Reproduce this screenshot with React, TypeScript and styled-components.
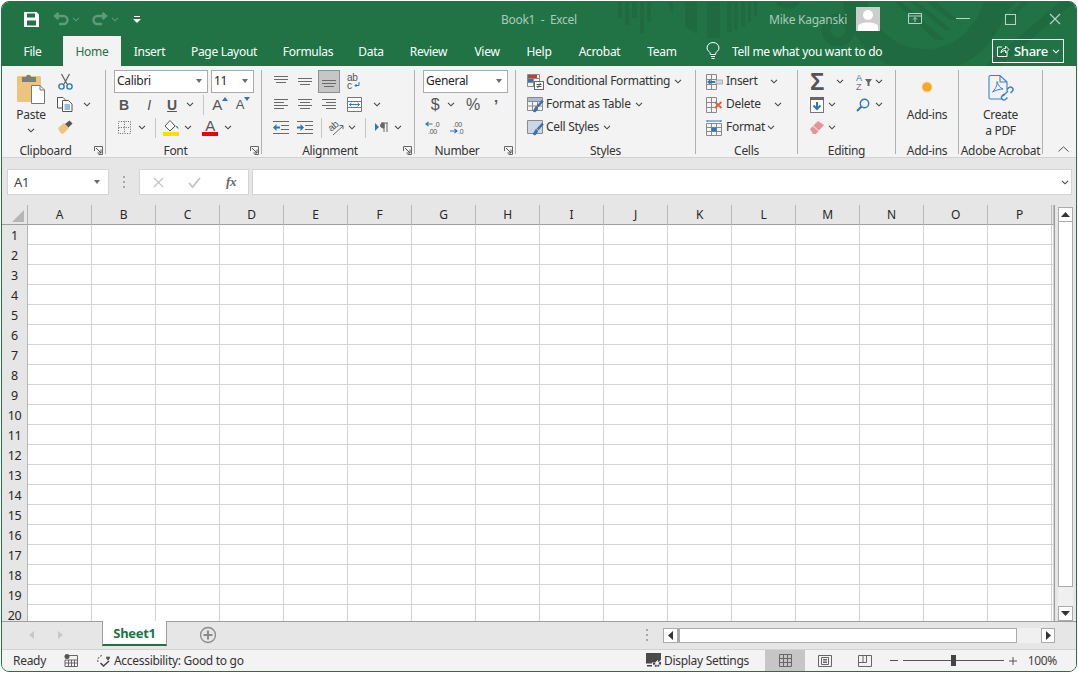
import { Fragment, type ReactNode } from "react";
import styled, { createGlobalStyle } from "styled-components";

const GlobalStyle = createGlobalStyle`
  html, body { margin: 0; padding: 0; background: #fff; }
  * { box-sizing: border-box; }
  body {
    font-family: "Noto Sans", "Open Sans", sans-serif;
    font-size: 12px;
    letter-spacing: -0.3px;
    color: #262626;
    overflow: hidden;
  }
`;

const Window = styled.div`
  margin: 1px 0 0 1px;
  width: 1076px;
  height: 671px;
  border: 1px solid #217346;
  border-radius: 8px;
  overflow: hidden;
  display: flex;
  flex-direction: column;
  background: #e6e6e6;
`;

const Head = styled.div`
  position: relative;
  background: #217346;
  height: 64px;
  flex: none;
`;

const Deco = styled.svg`
  position: absolute;
  left: 0;
  top: 0;
`;

const TitleBar = styled.div`
  position: relative;
  height: 34px;
  display: flex;
  align-items: center;
  padding-left: 20px;
`;

const Slot = styled.div<{ $w: number; $ml?: number }>`
  width: ${(p) => p.$w}px;
  margin-left: ${(p) => p.$ml ?? 0}px;
  flex: none;
  display: flex;
  align-items: center;
  justify-content: center;
  height: 100%;
`;

const DocTitle = styled.div`
  margin: 1px 0 0 357px;
  color: #a9cbb8;
  white-space: pre;
  font-size: 12px;
`;

const UserBlock = styled.div`
  margin-left: auto;
  display: flex;
  align-items: center;
  height: 100%;
`;

const UserName = styled.div`
  color: #a9cbb8;
  font-size: 12px;
  letter-spacing: -0.25px;
  margin: 1px 9px 0 0;
`;

const Avatar = styled.div`
  width: 24px;
  height: 24px;
  background: #cdcdcd;
  margin-right: 12px;
  overflow: hidden;
`;

const TabRow = styled.div`
  position: relative;
  height: 30px;
  display: flex;
  align-items: stretch;
`;

const Tab = styled.div<{ $w: number; $active?: boolean }>`
  width: ${(p) => p.$w}px;
  flex: none;
  display: flex;
  align-items: center;
  justify-content: center;
  color: ${(p) => (p.$active ? "#217346" : "#fff")};
  background: ${(p) => (p.$active ? "#f3f3f3" : "transparent")};
  font-size: 12px;
`;

const TellMe = styled.div`
  display: flex;
  align-items: center;
  color: #fff;
  margin-left: 16px;
  gap: 12px;
`;

const ShareButton = styled.div`
  margin: 3px 12px 3px auto;
  width: 72px;
  border: 1px solid #fff;
  display: flex;
  align-items: center;
  justify-content: center;
  gap: 4px;
  color: #fff;
  font-size: 13px;
  font-weight: 500;
`;

const Ribbon = styled.div`
  height: 92px;
  flex: none;
  background: #f3f3f3;
  border-bottom: 1px solid #d2d2d2;
  padding: 4px 0 3px;
  display: flex;
`;

const Group = styled.div<{ $w: number }>`
  width: ${(p) => p.$w}px;
  flex: none;
  border-right: 1px solid #b1b1b1;
  display: flex;
  flex-direction: column;
  height: 84px;
`;

const GroupBody = styled.div`
  flex: 1;
  display: flex;
  min-height: 0;
`;

const Rows = styled.div`
  display: flex;
  flex-direction: column;
`;

const Row = styled.div<{ $pl?: number }>`
  display: flex;
  align-items: center;
  height: 23px;
  padding-left: ${(p) => p.$pl ?? 0}px;
  white-space: nowrap;
`;

const GroupFoot = styled.div`
  height: 15px;
  padding-top: 7px;
  display: flex;
  align-items: center;
  font-size: 12px;
  color: #333;
`;

const FootLabel = styled.div`
  flex: 1;
  text-align: center;
  white-space: nowrap;
`;

const Launcher = styled.div`
  width: 16px;
  display: flex;
  align-items: center;
  justify-content: center;
  padding-left: 2px;
`;

const Combo = styled.div<{ $w: number; $ml?: number }>`
  width: ${(p) => p.$w}px;
  height: 23px;
  margin-top: -1px;
  margin-left: ${(p) => p.$ml ?? 0}px;
  background: #fff;
  border: 1px solid #ababab;
  padding: 0 5px 1px 2px;
  display: flex;
  align-items: center;
  justify-content: space-between;
  flex: none;
`;

const Caret = styled.span`
  width: 0;
  height: 0;
  border-left: 3.5px solid transparent;
  border-right: 3.5px solid transparent;
  border-top: 4px solid #6a6a6a;
`;

const Sep = styled.div<{ $w: number }>`
  width: ${(p) => p.$w}px;
  flex: none;
  display: flex;
  justify-content: center;
  &::after {
    content: "";
    width: 1px;
    height: 20px;
    background: #c6c6c6;
  }
`;

const FaceText = styled.span<{ $bold?: boolean; $italic?: boolean; $under?: boolean; $size?: number }>`
  font-family: "Liberation Sans", sans-serif;
  font-size: ${(p) => p.$size ?? 14}px;
  font-weight: ${(p) => (p.$bold ? 700 : 400)};
  font-style: ${(p) => (p.$italic ? "italic" : "normal")};
  text-decoration: ${(p) => (p.$under ? "underline" : "none")};
  color: #555;
`;

const ActiveSlot = styled.div`
  width: 22px;
  height: 23px;
  margin-top: -1px;
  flex: none;
  background: #c6c6c6;
  border: 1px solid #8f8f8f;
  display: flex;
  align-items: center;
  justify-content: center;
`;

const CmdText = styled.span<{ $ml?: number; $w?: number }>`
  margin-left: ${(p) => p.$ml ?? 0}px;
  ${(p) => (p.$w ? `width: ${p.$w}px; flex: none;` : "")}
  color: #333;
`;

const RibbonCmd = styled(CmdText)`
  margin-top: -2px;
`;

const BigButton = styled.div<{ $w: number; $ml?: number; $top: number }>`
  width: ${(p) => p.$w}px;
  margin-left: ${(p) => p.$ml ?? 0}px;
  padding-top: ${(p) => p.$top}px;
  flex: none;
  display: flex;
  flex-direction: column;
  align-items: center;
  line-height: 16px;
  color: #333;
`;

const BigLine = styled.span<{ $mt?: number }>`
  display: block;
  margin-top: ${(p) => p.$mt ?? 0}px;
`;

const Collapse = styled.div`
  align-self: flex-end;
  margin-left: 15px;
  height: 10px;
  display: flex;
  align-items: center;
`;

const FormulaBar = styled.div`
  height: 47px;
  flex: none;
  padding: 11px 0 10px 5px;
  display: flex;
  background: #e6e6e6;
`;

const NameBox = styled.div`
  width: 102px;
  background: #fff;
  border: 1px solid #d4d4d4;
  padding: 0 8px 0 6px;
  display: flex;
  align-items: center;
  justify-content: space-between;
  font-size: 13px;
  color: #444;
`;

const GripDots = styled.div<{ $w: number; $mr?: number }>`
  width: ${(p) => p.$w}px;
  margin-right: ${(p) => p.$mr ?? 0}px;
  flex: none;
  display: flex;
  flex-direction: column;
  align-items: center;
  justify-content: center;
  gap: 3px;
  & > i {
    width: 2px;
    height: 2px;
    background: #a8a8a8;
  }
`;

const FxBox = styled.div`
  width: 110px;
  background: #fff;
  border: 1px solid #d4d4d4;
  display: flex;
  align-items: center;
`;

const FxMark = styled.span`
  font-family: "Liberation Serif", serif;
  font-style: italic;
  font-weight: 700;
  font-size: 13px;
  color: #666;
`;

const FormulaInput = styled.div`
  width: 820px;
  margin-left: 3px;
  background: #fff;
  border: 1px solid #d4d4d4;
  display: flex;
  align-items: center;
  justify-content: flex-end;
  padding-right: 2px;
`;

const SheetArea = styled.div`
  height: 416px;
  flex: none;
  display: flex;
`;

const Viewport = styled.div`
  width: 1053px;
  height: 416px;
  flex: none;
  overflow: hidden;
  border-right: 1px solid #9f9f9f;
`;

const CellGrid = styled.div`
  display: grid;
  grid-template-columns: 26px repeat(16, 64px) 2px;
  grid-auto-rows: 20px;
  background: #fff;
`;

const Corner = styled.div`
  background: #e6e6e6;
  border-right: 1px solid #b4b4b4;
  border-bottom: 1px solid #9f9f9f;
  position: relative;
  &::after {
    content: "";
    position: absolute;
    right: 3px;
    bottom: 2px;
    border-left: 12px solid transparent;
    border-bottom: 12px solid #b6b6b6;
  }
`;

const ColHead = styled.div`
  background: #e6e6e6;
  border-right: 1px solid #b9b9b9;
  border-bottom: 1px solid #9f9f9f;
  display: flex;
  align-items: center;
  justify-content: center;
  color: #262626;
  font-size: 12px;
`;

const RowHead = styled.div`
  background: #e6e6e6;
  border-right: 1px solid #b4b4b4;
  display: flex;
  align-items: center;
  justify-content: center;
  color: #262626;
  font-size: 12.5px;
`;

const Cell = styled.div`
  border-right: 1px solid #d4d4d4;
  border-bottom: 1px solid #d4d4d4;
`;

const VScroll = styled.div`
  width: 15px;
  margin: 2px 0 0 3px;
  flex: none;
  display: flex;
  flex-direction: column;
  height: 414px;
`;

const ScrollButton = styled.div<{ $w?: number; $h?: number }>`
  width: ${(p) => (p.$w ? `${p.$w}px` : "auto")};
  height: ${(p) => (p.$h ? `${p.$h}px` : "auto")};
  flex: none;
  background: #fff;
  border: 1px solid #ababab;
  display: flex;
  align-items: center;
  justify-content: center;
`;

const VThumb = styled.div`
  height: 365px;
  flex: none;
  background: #fff;
  border: 1px solid #ababab;
  border-top: 0;
`;

const VTrack = styled.div`
  flex: 1;
  background: #f0f0f0;
`;

const SheetTabs = styled.div`
  height: 28px;
  flex: none;
  border-top: 1px solid #9f9f9f;
  padding-left: 18px;
  display: flex;
  align-items: flex-start;
`;

const SheetTab = styled.div`
  width: 65px;
  height: 25px;
  margin: -1px 0 0 24px;
  flex: none;
  background: #fff;
  border-left: 1px solid #9f9f9f;
  border-right: 1px solid #9f9f9f;
  border-bottom: 2px solid #217346;
  color: #217346;
  font-weight: 700;
  font-size: 13px;
  display: flex;
  align-items: center;
  justify-content: center;
`;

const TabNav = styled.div`
  display: flex;
  height: 26px;
`;

const AddSheet = styled.div`
  margin: 4px 0 0 32px;
  width: 18px;
  height: 18px;
`;

const HScrollWrap = styled.div`
  margin: 0 21px 0 auto;
  display: flex;
  height: 26px;
  align-items: center;
`;

const HScroll = styled.div`
  display: flex;
  height: 15px;
  width: 392px;
  margin-top: 1px;
`;

const HThumb = styled.div`
  width: 339px;
  flex: none;
  background: #fff;
  border: 1px solid #ababab;
  border-left: 2px solid #ababab;
`;

const HTrack = styled.div`
  flex: 1;
  background: #f0f0f0;
`;

const StatusBar = styled.div`
  height: 22px;
  flex: none;
  background: #f3f3f3;
  border-top: 1px solid #d2d2d2;
  padding-left: 11px;
  display: flex;
  align-items: center;
  color: #444;
  font-size: 12px;
  white-space: nowrap;
`;

const StatusRight = styled.div`
  margin-left: auto;
  height: 100%;
  display: flex;
  align-items: center;
  padding-right: 19px;
`;

const ViewToggle = styled.div<{ $active?: boolean }>`
  width: 40px;
  height: 100%;
  flex: none;
  background: ${(p) => (p.$active ? "#c6c6c6" : "transparent")};
  display: flex;
  align-items: center;
  justify-content: center;
`;

const ZoomTrack = styled.div`
  position: relative;
  width: 101px;
  height: 1px;
  flex: none;
  background: #555;
`;

const ZoomThumb = styled.div`
  position: absolute;
  left: 48px;
  top: -5px;
  width: 5px;
  height: 11px;
  background: #444;
`;

const ZoomValue = styled.div`
  width: 35px;
  flex: none;
  text-align: right;
`;

const Ico = styled.svg`
  display: block;
  flex: none;
  overflow: visible;
`;

const SupIco = styled(Ico)`
  margin-bottom: 12px;
`;

const GRAY_TEXT = "#555";
const BLUE = "#2f77bc";

const Chev = ({ c = "#444" }: { c?: string }) => (
  <Ico width="8" height="5" viewBox="0 0 8 5">
    <path d="M1 .8 4 3.8 7 .8" fill="none" stroke={c} strokeWidth="1.1" />
  </Ico>
);

const Corner9 = () => (
  <Ico width="9" height="9" viewBox="0 0 9 9">
    <path d="M.5 5V.5H8.5V8.5H4.5" fill="none" stroke="#666" />
    <path d="M2 2 7 7M7 3.5V7H3.5" fill="none" stroke="#555" />
  </Ico>
);

const AlignLines = ({ rows, w = 14 }: { rows: [number, number, number?][]; w?: number }) => (
  <Ico width={w} height="13" viewBox={`0 0 ${w} 13`}>
    {rows.map(([y, x1, x2], i) => (
      <rect key={i} x={x1} y={y} width={(x2 ?? w) - x1} height="1" fill="#6a6a6a" />
    ))}
  </Ico>
);

const VAlign = ({ y }: { y: number }) => (
  <AlignLines rows={[[y, 0], [y + 3, 0], [y + 6, 2, 12]]} />
);

const Indent = ({ out }: { out?: boolean }) => (
  <Ico width="16" height="13" viewBox="0 0 16 13">
    {[0, 4, 8, 12].map((y) => (
      <rect key={y} x={y === 0 || y === 12 ? 0 : 8} y={y} width={y === 0 || y === 12 ? 16 : 8} height="1" fill="#6a6a6a" />
    ))}
    {out ? (
      <path d="M0 6.5 3.5 3V5.5H7V7.5H3.5V10Z" fill={BLUE} />
    ) : (
      <path d="M7 6.5 3.5 3V5.5H0V7.5H3.5V10Z" fill={BLUE} />
    )}
  </Ico>
);

const TableIcon = ({ children }: { children?: ReactNode }) => (
  <Ico width="17" height="17" viewBox="0 0 17 17">
    <path d="M.5 1.5H15.5V14.5H.5ZM.5 5.5H15.5M.5 10H15.5M5.5 1.5V14.5M10.5 1.5V14.5" fill="none" stroke="#8a8a8a" />
    {children}
  </Ico>
);

const Brush = () => <path d="M6 15 9 10 11 12 9 15.5C8 16.5 6.5 16 6 15ZM10 9.5 15 4 16.5 5.5 11.5 11Z" fill={BLUE} stroke="#444" strokeWidth=".3" />;

const columns = "ABCDEFGHIJKLMNOP".split("");
const rows = Array.from({ length: 20 }, (_, i) => i + 1);

function App() {
  return (
    <>
      <GlobalStyle />
      <Window>
        <Head>
          <Deco width="1075" height="64" viewBox="2 2 1075 64">
            <g fill="#1f6a41">
              <rect x="618" y="0" width="4" height="18" />
              <rect x="625" y="0" width="4" height="25" />
              <rect x="632" y="0" width="5" height="18" />
              <rect x="640" y="0" width="4" height="33" />
              <rect x="647" y="0" width="4" height="22" />
              <path d="M667 0H673V15Z" />
              <path d="M685 0H697V34L685 27Z" />
              <rect x="707" y="0" width="13" height="38" />
              <rect x="727" y="0" width="5" height="32" />
              <rect x="734" y="0" width="4" height="30" />
              <rect x="741" y="0" width="4" height="27" />
              <rect x="748" y="0" width="3" height="22" />
              <rect x="754" y="0" width="3" height="16" />
              <path d="M775 0A14 14 0 0 0 801 0Z" />
              <path d="M893 0H899L945 40H935ZM908 0H915L952 30H945ZM925 0H933L958 20H950Z" />
              <path d="M994 0H1002L975 30H967ZM1010 0H1018L990 28H982ZM1024 0H1030L1010 22H1002Z" />
            </g>
            <circle cx="838" cy="30" r="12" fill="none" stroke="#1f6a41" strokeWidth="9" />
            <circle cx="925" cy="-10" r="71" fill="none" stroke="#1f6a41" strokeWidth="24" />
            <path d="M985 66 1062 0H1077L1000 66Z" fill="#1f6a41" />
          </Deco>
          <TitleBar>
            <Slot $w={18}>
              <Ico width="15" height="15" viewBox="0 0 15 15">
                <path fillRule="evenodd" d="M0 0H12.5L15 2.5V15H0ZM3 1.5V5.5H11V1.5ZM3 8.5V13.5H12V8.5Z" fill="#fff" />
              </Ico>
            </Slot>
            <Slot $w={20} $ml={11}>
              <Ico width="16" height="14" viewBox="0 0 16 14">
                <path d="M3 4H10.5A4 4 0 0 1 10.5 12H6M5.5 .8 2 4 5.5 7.2" fill="none" stroke="#5c9c7b" strokeWidth="2.4" />
              </Ico>
            </Slot>
            <Slot $w={10}><Chev c="#5c9c7b" /></Slot>
            <Slot $w={20} $ml={9}>
              <Ico width="16" height="14" viewBox="0 0 16 14">
                <path d="M13 4H5.5A4 4 0 0 0 5.5 12H10M10.5 .8 14 4 10.5 7.2" fill="none" stroke="#5c9c7b" strokeWidth="2.4" />
              </Ico>
            </Slot>
            <Slot $w={10}><Chev c="#5c9c7b" /></Slot>
            <Slot $w={14} $ml={10}>
              <Ico width="8" height="8" viewBox="0 0 8 8">
                <path d="M1 1H7V2H1ZM0 4H8L4 8Z" fill="#fff" />
              </Ico>
            </Slot>
            <DocTitle>Book1  -  Excel</DocTitle>
            <UserBlock>
              <UserName>Mike Kaganski</UserName>
              <Avatar>
                <Ico width="24" height="24" viewBox="0 0 24 24">
                  <circle cx="12" cy="8" r="5" fill="#fff" />
                  <path d="M2 24V20C2 17 6 15.5 12 15.5S22 17 22 20V24Z" fill="#fff" />
                </Ico>
              </Avatar>
              <Slot $w={46}>
                <Ico width="14" height="12" viewBox="0 0 14 12">
                  <path d="M.5 .5H13.5V10.5H.5ZM.5 3H13.5M7 9V4.5M5 6.5 7 4.5 9 6.5" fill="none" stroke="#b8d4c5" />
                </Ico>
              </Slot>
              <Slot $w={46} $ml={2}>
                <Ico width="14" height="2" viewBox="0 0 14 2"><rect y="0" width="14" height="1" fill="#b8d4c5" /></Ico>
              </Slot>
              <Slot $w={48}>
                <Ico width="11" height="11" viewBox="0 0 11 11"><rect x=".5" y=".5" width="10" height="10" fill="none" stroke="#b8d4c5" /></Ico>
              </Slot>
              <Slot $w={42}>
                <Ico width="12" height="12" viewBox="0 0 12 12"><path d="M1 1 11 11M11 1 1 11" stroke="#b8d4c5" strokeWidth="1.1" /></Ico>
              </Slot>
            </UserBlock>
          </TitleBar>
          <TabRow>
            <Tab $w={61}>File</Tab>
            <Tab $w={58} $active>Home</Tab>
            <Tab $w={57}>Insert</Tab>
            <Tab $w={92}>Page Layout</Tab>
            <Tab $w={76}>Formulas</Tab>
            <Tab $w={50}>Data</Tab>
            <Tab $w={65}>Review</Tab>
            <Tab $w={52}>View</Tab>
            <Tab $w={52}>Help</Tab>
            <Tab $w={69}>Acrobat</Tab>
            <Tab $w={56}>Team</Tab>
            <TellMe>
              <Ico width="14" height="18" viewBox="0 0 14 18">
                <path d="M4.5 12.5C4.5 9.5 1 9 1 6A6 5.5 0 0 1 13 6C13 9 9.5 9.5 9.5 12.5ZM5 14.5H9M5.5 16.5H8.5" fill="none" stroke="#fff" />
              </Ico>
              <span>Tell me what you want to do</span>
            </TellMe>
            <ShareButton>
              <Ico width="14" height="14" viewBox="0 0 14 14">
                <path d="M6 3H1.5V12.5H11V8M5 9C5 6 7 4.5 9.5 4.5V2L13 5.5 9.5 9V6.5C7.5 6.5 6 7.5 5 9Z" fill="none" stroke="#fff" />
              </Ico>
              <span>Share</span>
              <Chev c="#fff" />
            </ShareButton>
          </TabRow>
        </Head>

        <Ribbon>
          <Group $w={104}>
            <GroupBody>
              <BigButton $w={50} $ml={4} $top={3}>
                <Ico width="30" height="32" viewBox="0 0 30 32">
                  <rect x="1" y="3" width="24" height="26" rx="1.5" fill="#ebc57f" />
                  <path d="M6 9V4H10C10 1 15 1 15 4H20V9Z" fill="#7d7d7d" />
                  <path d="M15.5 12.5H24L28.5 17V30.5H15.5Z" fill="#fff" stroke="#777" />
                  <path d="M24 12.5V17H28.5" fill="none" stroke="#777" />
                </Ico>
                <BigLine $mt={2}>Paste</BigLine>
                <BigLine $mt={5}><Chev /></BigLine>
              </BigButton>
              <Rows>
                <Row>
                  <Slot $w={18}>
                    <Ico width="15" height="16" viewBox="0 0 15 16">
                      <path d="M3.5 0 9 10M11.5 0 6 10" stroke="#666" strokeWidth="1.3" fill="none" />
                      <circle cx="3.5" cy="12.5" r="2.6" fill="none" stroke={BLUE} strokeWidth="1.4" />
                      <circle cx="11.5" cy="12.5" r="2.6" fill="none" stroke={BLUE} strokeWidth="1.4" />
                    </Ico>
                  </Slot>
                </Row>
                <Row>
                  <Slot $w={18}>
                    <Ico width="16" height="15" viewBox="0 0 16 15">
                      <path d="M.5 .5H6L8 2.5V11H.5Z" fill="#fff" stroke="#555" />
                      <path d="M5.5 3.5H11.5L15 7V14.5H5.5Z" fill="#fff" stroke="#555" />
                      <path d="M7.5 8H13M7.5 10H13M7.5 12H13" stroke={BLUE} />
                    </Ico>
                  </Slot>
                  <Slot $w={26}><Chev /></Slot>
                </Row>
                <Row>
                  <Slot $w={18}>
                    <Ico width="16" height="15" viewBox="0 0 16 15">
                      <path d="M1 8 7 3 12 8 6 14C4 14 2 11 1 8Z" fill="#ebc57f" />
                      <path d="M8 4 12.5 0.5 15.5 3.5 11.5 7.5Z" fill="#555" />
                    </Ico>
                  </Slot>
                </Row>
              </Rows>
            </GroupBody>
            <GroupFoot>
              <FootLabel>Clipboard</FootLabel>
              <Launcher><Corner9 /></Launcher>
            </GroupFoot>
          </Group>

          <Group $w={156}>
            <GroupBody>
              <Rows>
                <Row $pl={8}>
                  <Combo $w={94}>Calibri<Caret /></Combo>
                  <Combo $w={43} $ml={3}>11<Caret /></Combo>
                </Row>
                <Row $pl={6}>
                  <Slot $w={24}><FaceText $bold>B</FaceText></Slot>
                  <Slot $w={26}><FaceText $italic $size={14}>I</FaceText></Slot>
                  <Slot $w={20}><FaceText $bold $under>U</FaceText></Slot>
                  <Slot $w={16}><Chev /></Slot>
                  <Sep $w={10} />
                  <Slot $w={24}>
                    <FaceText $size={15}>A</FaceText>
                    <SupIco width="6" height="4" viewBox="0 0 6 4"><path d="M0 4 3 0 6 4Z" fill={BLUE} /></SupIco>
                  </Slot>
                  <Slot $w={22}>
                    <FaceText $size={13}>A</FaceText>
                    <SupIco width="6" height="4" viewBox="0 0 6 4"><path d="M0 0H6L3 4Z" fill={BLUE} /></SupIco>
                  </Slot>
                </Row>
                <Row $pl={6}>
                  <Slot $w={24}>
                    <Ico width="13" height="13" viewBox="0 0 13 13">
                      <path d="M.5 .5H12.5V12.5H.5ZM6.5 .5V12.5M.5 6.5H12.5" fill="none" stroke="#666" strokeDasharray="1 1.4" />
                    </Ico>
                  </Slot>
                  <Slot $w={12}><Chev /></Slot>
                  <Sep $w={14} />
                  <Slot $w={18}>
                    <Ico width="17" height="17" viewBox="0 0 17 17">
                      <path d="M2 7 7 1.5 12 7 7 12Z" fill="#fff" stroke="#555" />
                      <path d="M12 6.5C14 7 15.5 8 15.5 10 14 9 13 8 12 6.5Z" fill={BLUE} />
                      <rect y="13" width="16" height="4" fill="#ffdd00" />
                    </Ico>
                  </Slot>
                  <Slot $w={16}><Chev /></Slot>
                  <Slot $w={28}>
                    <Ico width="16" height="17" viewBox="0 0 16 17">
                      <text x="8" y="12" textAnchor="middle" fontFamily="Liberation Sans" fontSize="15" fill={GRAY_TEXT}>A</text>
                      <rect y="13" width="16" height="4" fill="#ee0000" />
                    </Ico>
                  </Slot>
                  <Slot $w={7}><Chev /></Slot>
                </Row>
              </Rows>
            </GroupBody>
            <GroupFoot>
              <FootLabel>Font</FootLabel>
              <Launcher><Corner9 /></Launcher>
            </GroupFoot>
          </Group>

          <Group $w={153}>
            <GroupBody>
              <Rows>
                <Row $pl={8}>
                  <Slot $w={22}><VAlign y={1} /></Slot>
                  <Slot $w={26}><VAlign y={3} /></Slot>
                  <ActiveSlot><VAlign y={5} /></ActiveSlot>
                  <Slot $w={28}>
                    <Ico width="14" height="17" viewBox="0 0 14 17">
                      <text x="0" y="7.5" fontFamily="Liberation Sans" fontSize="10" fill={GRAY_TEXT}>ab</text>
                      <text x="0" y="16" fontFamily="Liberation Sans" fontSize="10" fill={GRAY_TEXT}>c</text>
                      <path d="M12 9V12.5H8M9.5 11 8 12.5 9.5 14" fill="none" stroke={BLUE} />
                    </Ico>
                  </Slot>
                </Row>
                <Row $pl={8}>
                  <Slot $w={22}><AlignLines rows={[[1, 0], [4, 0, 10], [7, 0], [10, 0, 10]]} /></Slot>
                  <Slot $w={26}><AlignLines rows={[[1, 0], [4, 2, 12], [7, 0], [10, 2, 12]]} /></Slot>
                  <Slot $w={22}><AlignLines rows={[[1, 0], [4, 4], [7, 0], [10, 4]]} /></Slot>
                  <Slot $w={28}>
                    <Ico width="15" height="15" viewBox="0 0 15 15">
                      <path d="M.5 .5H14.5V14.5H.5ZM.5 4.5H14.5M.5 10.5H14.5" fill="#fff" stroke="#777" />
                      <path d="M2.5 7.5H12.5M4.5 5.8 2.5 7.5 4.5 9.2M10.5 5.8 12.5 7.5 10.5 9.2" fill="none" stroke={BLUE} />
                    </Ico>
                  </Slot>
                  <Slot $w={18}><Chev /></Slot>
                </Row>
                <Row $pl={8}>
                  <Slot $w={22}><Indent out /></Slot>
                  <Slot $w={26}><Indent /></Slot>
                  <Sep $w={6} />
                  <Slot $w={24}>
                    <Ico width="16" height="16" viewBox="0 0 16 16">
                      <text x="1" y="10" transform="rotate(-40 5 8)" fontFamily="Liberation Sans" fontSize="10" fill={GRAY_TEXT}>ab</text>
                      <path d="M5 15 15 6M11.5 5.5H15V9" fill="none" stroke="#666" />
                    </Ico>
                  </Slot>
                  <Slot $w={8}><Chev /></Slot>
                  <Sep $w={18} />
                  <Slot $w={14}>
                    <Ico width="13" height="11" viewBox="0 0 13 11">
                      <path d="M0 1 4 5 0 9Z" fill={BLUE} />
                      <path d="M6 1H13M9 1V10M12 1V10M9 6C6.5 6 5.5 5 5.5 3.5S6.5 1 9 1Z" fill="#666" stroke="#666" />
                    </Ico>
                  </Slot>
                  <Slot $w={20}><Chev /></Slot>
                </Row>
              </Rows>
            </GroupBody>
            <GroupFoot>
              <FootLabel>Alignment</FootLabel>
              <Launcher><Corner9 /></Launcher>
            </GroupFoot>
          </Group>

          <Group $w={101}>
            <GroupBody>
              <Rows>
                <Row $pl={8}>
                  <Combo $w={85}>General<Caret /></Combo>
                </Row>
                <Row $pl={8}>
                  <Slot $w={24}><FaceText $size={16}>$</FaceText></Slot>
                  <Slot $w={8}><Chev /></Slot>
                  <Slot $w={36}><FaceText $size={16}>%</FaceText></Slot>
                  <Slot $w={10}><FaceText $bold $size={15}>’</FaceText></Slot>
                </Row>
                <Row $pl={8}>
                  <Slot $w={20}>
                    <Ico width="16" height="14" viewBox="0 0 16 14">
                      <text x="9" y="6" fontFamily="Liberation Sans" fontSize="7" fill={GRAY_TEXT}>.0</text>
                      <text x="3" y="13" fontFamily="Liberation Sans" fontSize="7" fill={GRAY_TEXT}>.00</text>
                      <path d="M7.5 3H1M3.5 1 1 3 3.5 5" fill="none" stroke={BLUE} strokeWidth="1.2" />
                    </Ico>
                  </Slot>
                  <Slot $w={28}>
                    <Ico width="16" height="14" viewBox="0 0 16 14">
                      <text x="4" y="6" fontFamily="Liberation Sans" fontSize="7" fill={GRAY_TEXT}>.00</text>
                      <text x="9" y="13" fontFamily="Liberation Sans" fontSize="7" fill={GRAY_TEXT}>.0</text>
                      <path d="M1 10H8M5.5 8 8 10 5.5 12" fill="none" stroke={BLUE} strokeWidth="1.2" />
                    </Ico>
                  </Slot>
                </Row>
              </Rows>
            </GroupBody>
            <GroupFoot>
              <FootLabel>Number</FootLabel>
              <Launcher><Corner9 /></Launcher>
            </GroupFoot>
          </Group>

          <Group $w={180}>
            <GroupBody>
              <Rows>
                <Row $pl={10}>
                  <Slot $w={18}>
                    <Ico width="17" height="16" viewBox="0 0 17 16">
                      <path d="M.5 .5H12.5V12.5H.5ZM.5 4.5H12.5M.5 8.5H12.5M6.5 .5V12.5" fill="none" stroke="#8a8a8a" />
                      <rect x="1" y="1" width="9" height="3" fill="#d9343a" />
                      <rect x="1" y="5" width="5" height="3" fill={BLUE} />
                      <rect x="7.5" y="7.5" width="9" height="8" fill="#fff" stroke="#666" />
                      <path d="M9.5 10.5H14.5M9.5 12.5H14.5M13.5 9 10.5 14" stroke="#555" fill="none" />
                    </Ico>
                  </Slot>
                  <RibbonCmd $ml={2}>Conditional Formatting</RibbonCmd>
                  <Slot $w={8} $ml={4}><Chev /></Slot>
                </Row>
                <Row $pl={10}>
                  <Slot $w={18}>
                    <TableIcon>
                      <rect x="1" y="2" width="14" height="3" fill="#a9bdd6" />
                      <Brush />
                    </TableIcon>
                  </Slot>
                  <RibbonCmd $ml={2}>Format as Table</RibbonCmd>
                  <Slot $w={8} $ml={4}><Chev /></Slot>
                </Row>
                <Row $pl={10}>
                  <Slot $w={18}>
                    <TableIcon>
                      <rect x="1" y="2" width="14" height="12" fill="#c9d7e8" />
                      <Brush />
                    </TableIcon>
                  </Slot>
                  <RibbonCmd $ml={2}>Cell Styles</RibbonCmd>
                  <Slot $w={8} $ml={4}><Chev /></Slot>
                </Row>
              </Rows>
            </GroupBody>
            <GroupFoot><FootLabel>Styles</FootLabel></GroupFoot>
          </Group>

          <Group $w={102}>
            <GroupBody>
              <Rows>
                <Row $pl={9}>
                  <Slot $w={18}>
                    <Ico width="17" height="16" viewBox="0 0 17 16">
                      <path d="M.5 .5H10.5V15.5H.5ZM.5 5.5H10.5M.5 10.5H10.5M5.5 .5V15.5" fill="none" stroke="#8a8a8a" />
                      <path d="M1 8 4.5 5V7H9V9H4.5V11Z" fill={BLUE} />
                      <rect x="10" y="6" width="6.5" height="4" fill="#d8d8d8" stroke="#888" strokeWidth=".6" />
                    </Ico>
                  </Slot>
                  <RibbonCmd $ml={3} $w={44}>Insert</RibbonCmd>
                  <Slot $w={7}><Chev /></Slot>
                </Row>
                <Row $pl={9}>
                  <Slot $w={18}>
                    <Ico width="17" height="16" viewBox="0 0 17 16">
                      <path d="M.5 .5H10.5V15.5H.5ZM.5 5.5H10.5M.5 10.5H10.5M5.5 .5V15.5" fill="none" stroke="#8a8a8a" />
                      <path d="M9 5 15.5 11M15.5 5 9 11" stroke="#e2633a" strokeWidth="1.8" />
                    </Ico>
                  </Slot>
                  <RibbonCmd $ml={3} $w={48}>Delete</RibbonCmd>
                  <Slot $w={7}><Chev /></Slot>
                </Row>
                <Row $pl={9}>
                  <Slot $w={18}>
                    <Ico width="17" height="16" viewBox="0 0 17 16">
                      <path d="M.5 3.5H15.5V15.5H.5ZM.5 7.5H15.5M.5 11.5H15.5M5.5 3.5V15.5M10.5 3.5V15.5" fill="none" stroke="#8a8a8a" />
                      <rect x="5.5" y="7.5" width="5" height="4" fill={BLUE} />
                      <path d="M1 1H15M1 0V2M15 0V2" stroke={BLUE} />
                    </Ico>
                  </Slot>
                  <RibbonCmd $ml={3} $w={41}>Format</RibbonCmd>
                  <Slot $w={7}><Chev /></Slot>
                </Row>
              </Rows>
            </GroupBody>
            <GroupFoot><FootLabel>Cells</FootLabel></GroupFoot>
          </Group>

          <Group $w={98}>
            <GroupBody>
              <Rows>
                <Row $pl={8}>
                  <Slot $w={22}><FaceText $bold $size={24}>Σ</FaceText></Slot>
                  <Slot $w={24}><Chev /></Slot>
                  <Slot $w={16} $ml={4}>
                    <Ico width="16" height="17" viewBox="0 0 16 17">
                      <text x="0" y="8" fontFamily="Liberation Sans" fontSize="9" fill={BLUE}>A</text>
                      <text x="0" y="16.5" fontFamily="Liberation Sans" fontSize="9" fill="#7a6a8a">Z</text>
                      <path d="M9 6H16L13.5 9.5V13H11.5V9.5Z" fill="#666" />
                    </Ico>
                  </Slot>
                  <Slot $w={14}><Chev /></Slot>
                </Row>
                <Row $pl={8}>
                  <Slot $w={22}>
                    <Ico width="14" height="16" viewBox="0 0 14 16">
                      <rect x=".5" y=".5" width="13" height="15" fill="#fff" stroke="#777" />
                      <rect x="0" y="0" width="14" height="3" fill="#666" />
                      <path d="M7 5V12M3.5 8.5 7 12 10.5 8.5" fill="none" stroke={BLUE} strokeWidth="2" />
                    </Ico>
                  </Slot>
                  <Slot $w={8}><Chev /></Slot>
                  <Slot $w={16} $ml={19}>
                    <Ico width="14" height="14" viewBox="0 0 14 14">
                      <circle cx="8.5" cy="5.5" r="4.2" fill="none" stroke={BLUE} strokeWidth="1.4" />
                      <path d="M5.5 8.5 1 13" stroke={BLUE} strokeWidth="2" />
                    </Ico>
                  </Slot>
                  <Slot $w={16}><Chev /></Slot>
                </Row>
                <Row $pl={8}>
                  <Slot $w={22}>
                    <Ico width="14" height="13" viewBox="0 0 14 13">
                      <path d="M0 8 8 0 14 4 6 13H3Z" fill="#e8929a" />
                      <path d="M3 5 9 10" stroke="#f3f3f3" />
                    </Ico>
                  </Slot>
                  <Slot $w={8}><Chev /></Slot>
                </Row>
              </Rows>
            </GroupBody>
            <GroupFoot><FootLabel>Editing</FootLabel></GroupFoot>
          </Group>

          <Group $w={63}>
            <GroupBody>
              <BigButton $w={62} $top={11}>
                <Ico width="12" height="12" viewBox="0 0 12 12">
                  <circle cx="6" cy="6" r="5.5" fill="#f9a825" opacity=".35" />
                  <circle cx="6" cy="6" r="4.6" fill="#f9a825" />
                </Ico>
                <BigLine $mt={14}>Add-ins</BigLine>
              </BigButton>
            </GroupBody>
            <GroupFoot><FootLabel>Add-ins</FootLabel></GroupFoot>
          </Group>

          <Group $w={84}>
            <GroupBody>
              <BigButton $w={83} $top={5}>
                <Ico width="26" height="29" viewBox="0 0 26 29">
                  <path d="M1 2C1 1 1.5 .5 2.5 .5H12L19 7V16M12 .5V7H19M14 24H2.5C1.5 24 1 23.5 1 22.5V2" fill="none" stroke="#3b7fd1" strokeWidth="1.1" />
                  <path d="M4.5 17C7 15 9.5 10 9 6.5 10 10 12 13 15 14 12 14 8 15 4.5 17Z" fill="none" stroke="#3b7fd1" />
                  <path d="M15 21 20 16M19 14.5 21 12.5A2.5 2.5 0 0 1 24.5 16L22.5 18M16 19 14 21A2.5 2.5 0 0 0 17.5 24.5L19.5 22.5" fill="none" stroke="#3b7fd1" strokeWidth="1.4" />
                </Ico>
                <BigLine $mt={3}>Create</BigLine>
                <BigLine>a PDF</BigLine>
              </BigButton>
            </GroupBody>
            <GroupFoot><FootLabel>Adobe Acrobat</FootLabel></GroupFoot>
          </Group>

          <Collapse>
            <Ico width="11" height="6" viewBox="0 0 11 6">
              <path d="M.5 5.5 5.5 .8 10.5 5.5" fill="none" stroke="#555" />
            </Ico>
          </Collapse>
        </Ribbon>

        <FormulaBar>
          <NameBox>A1<Caret /></NameBox>
          <GripDots $w={30}><i /><i /><i /></GripDots>
          <FxBox>
            <Slot $w={36}>
              <Ico width="11" height="11" viewBox="0 0 11 11"><path d="M1 1 10 10M10 1 1 10" stroke="#c4c4c4" strokeWidth="1.3" /></Ico>
            </Slot>
            <Slot $w={37}>
              <Ico width="13" height="11" viewBox="0 0 13 11"><path d="M1 6 4.5 10 12 1" fill="none" stroke="#c4c4c4" strokeWidth="1.8" /></Ico>
            </Slot>
            <Slot $w={36}><FxMark>fx</FxMark></Slot>
          </FxBox>
          <FormulaInput><Chev /></FormulaInput>
        </FormulaBar>

        <SheetArea>
          <Viewport>
            <CellGrid>
              <Corner />
              {columns.map((c) => (
                <ColHead key={c}>{c}</ColHead>
              ))}
              <ColHead />
              {rows.map((r) => (
                <Fragment key={r}>
                  <RowHead>{r}</RowHead>
                  {columns.map((c) => (
                    <Cell key={c} />
                  ))}
                  <Cell />
                </Fragment>
              ))}
            </CellGrid>
          </Viewport>
          <VScroll>
            <ScrollButton $h={15}>
              <Ico width="9" height="5" viewBox="0 0 9 5"><path d="M0 5 4.5 0 9 5Z" fill="#333" /></Ico>
            </ScrollButton>
            <VThumb />
            <VTrack />
            <ScrollButton $h={15}>
              <Ico width="9" height="5" viewBox="0 0 9 5"><path d="M0 0H9L4.5 5Z" fill="#333" /></Ico>
            </ScrollButton>
          </VScroll>
        </SheetArea>

        <SheetTabs>
          <TabNav>
            <Slot $w={22}>
              <Ico width="5" height="8" viewBox="0 0 5 8"><path d="M5 0V8L0 4Z" fill="#c8c8c8" /></Ico>
            </Slot>
            <Slot $w={36}>
              <Ico width="5" height="8" viewBox="0 0 5 8"><path d="M0 0V8L5 4Z" fill="#c8c8c8" /></Ico>
            </Slot>
          </TabNav>
          <SheetTab>Sheet1</SheetTab>
          <AddSheet>
            <Ico width="18" height="18" viewBox="0 0 18 18">
              <circle cx="9" cy="9" r="7.5" fill="none" stroke="#8a8a8a" strokeWidth="1.3" />
              <path d="M9 4.5V13.5M4.5 9H13.5" stroke="#8a8a8a" strokeWidth="2" />
            </Ico>
          </AddSheet>
          <HScrollWrap>
            <GripDots $w={16} $mr={8}><i /><i /><i /></GripDots>
            <HScroll>
              <ScrollButton $w={15}>
                <Ico width="5" height="9" viewBox="0 0 5 9"><path d="M5 0V9L0 4.5Z" fill="#333" /></Ico>
              </ScrollButton>
              <HThumb />
              <HTrack />
              <ScrollButton $w={14}>
                <Ico width="5" height="9" viewBox="0 0 5 9"><path d="M0 0V9L5 4.5Z" fill="#333" /></Ico>
              </ScrollButton>
            </HScroll>
          </HScrollWrap>
        </SheetTabs>

        <StatusBar>
          <CmdText $w={51}>Ready</CmdText>
          <Ico width="14" height="13" viewBox="0 0 14 13">
            <circle cx="3" cy="2.5" r="2.5" fill="#555" />
            <path d="M5 1.5H13.5V12.5H1V6H13.5M1 9H13.5M4.5 6V12.5M7.5 6V12.5M10.5 6V12.5" fill="none" stroke="#666" />
          </Ico>
          <Slot $w={16} $ml={17}>
            <Ico width="16" height="15" viewBox="0 0 16 15">
              <path d="M3 9A5 5 0 0 1 8 2.5M10.5 3" fill="none" stroke="#555" strokeDasharray="2 1.2" />
              <path d="M11 4.5C11 3 13 3 13 4.5 13 3 15 3 15 4.5 15 6 13 7.5 13 7.5S11 6 11 4.5Z" fill="#555" />
              <path d="M5.5 10 8.5 13 14 8" fill="none" stroke="#444" strokeWidth="1.5" />
            </Ico>
          </Slot>
          <CmdText $ml={3}>Accessibility: Good to go</CmdText>
          <StatusRight>
            <Ico width="16" height="15" viewBox="0 0 16 15">
              <path d="M0 0H15V7H11.5L9 9.5H6V10.5H0Z" fill="#4a4a4a" />
              <circle cx="11" cy="10" r="3" fill="none" stroke="#444" strokeWidth="2.2" strokeDasharray="1.6 .9" />
              <rect x="1" y="12" width="5" height="1.5" fill="#444" />
            </Ico>
            <CmdText $ml={2} $w={82}>Display Settings</CmdText>
            <Slot $w={0} $ml={19} />
            <ViewToggle $active>
              <Ico width="13" height="13" viewBox="0 0 13 13">
                <path d="M.5 .5H12.5V12.5H.5ZM.5 4.5H12.5M.5 8.5H12.5M4.5 .5V12.5M8.5 .5V12.5" fill="none" stroke="#666" />
              </Ico>
            </ViewToggle>
            <ViewToggle>
              <Ico width="14" height="12" viewBox="0 0 14 12">
                <path d="M.5 .5H13.5V11.5H.5Z M3.5 2.5H10.5V9.5H3.5ZM5 4.5H9M5 6H9M5 7.5H9" fill="none" stroke="#666" />
              </Ico>
            </ViewToggle>
            <ViewToggle>
              <Ico width="14" height="12" viewBox="0 0 14 12">
                <path d="M.5 .5H13.5V11.5H.5ZM.5 7.5H8.5V.5M5 .5V7.5" fill="none" stroke="#666" />
              </Ico>
            </ViewToggle>
            <Slot $w={18}>
              <Ico width="8" height="1" viewBox="0 0 8 1"><rect width="8" height="1" fill="#555" /></Ico>
            </Slot>
            <ZoomTrack><ZoomThumb /></ZoomTrack>
            <Slot $w={18}>
              <Ico width="8" height="8" viewBox="0 0 8 8"><path d="M4 0V8M0 4H8" stroke="#555" /></Ico>
            </Slot>
            <ZoomValue>100%</ZoomValue>
          </StatusRight>
        </StatusBar>
      </Window>
    </>
  );
}

export default App;
